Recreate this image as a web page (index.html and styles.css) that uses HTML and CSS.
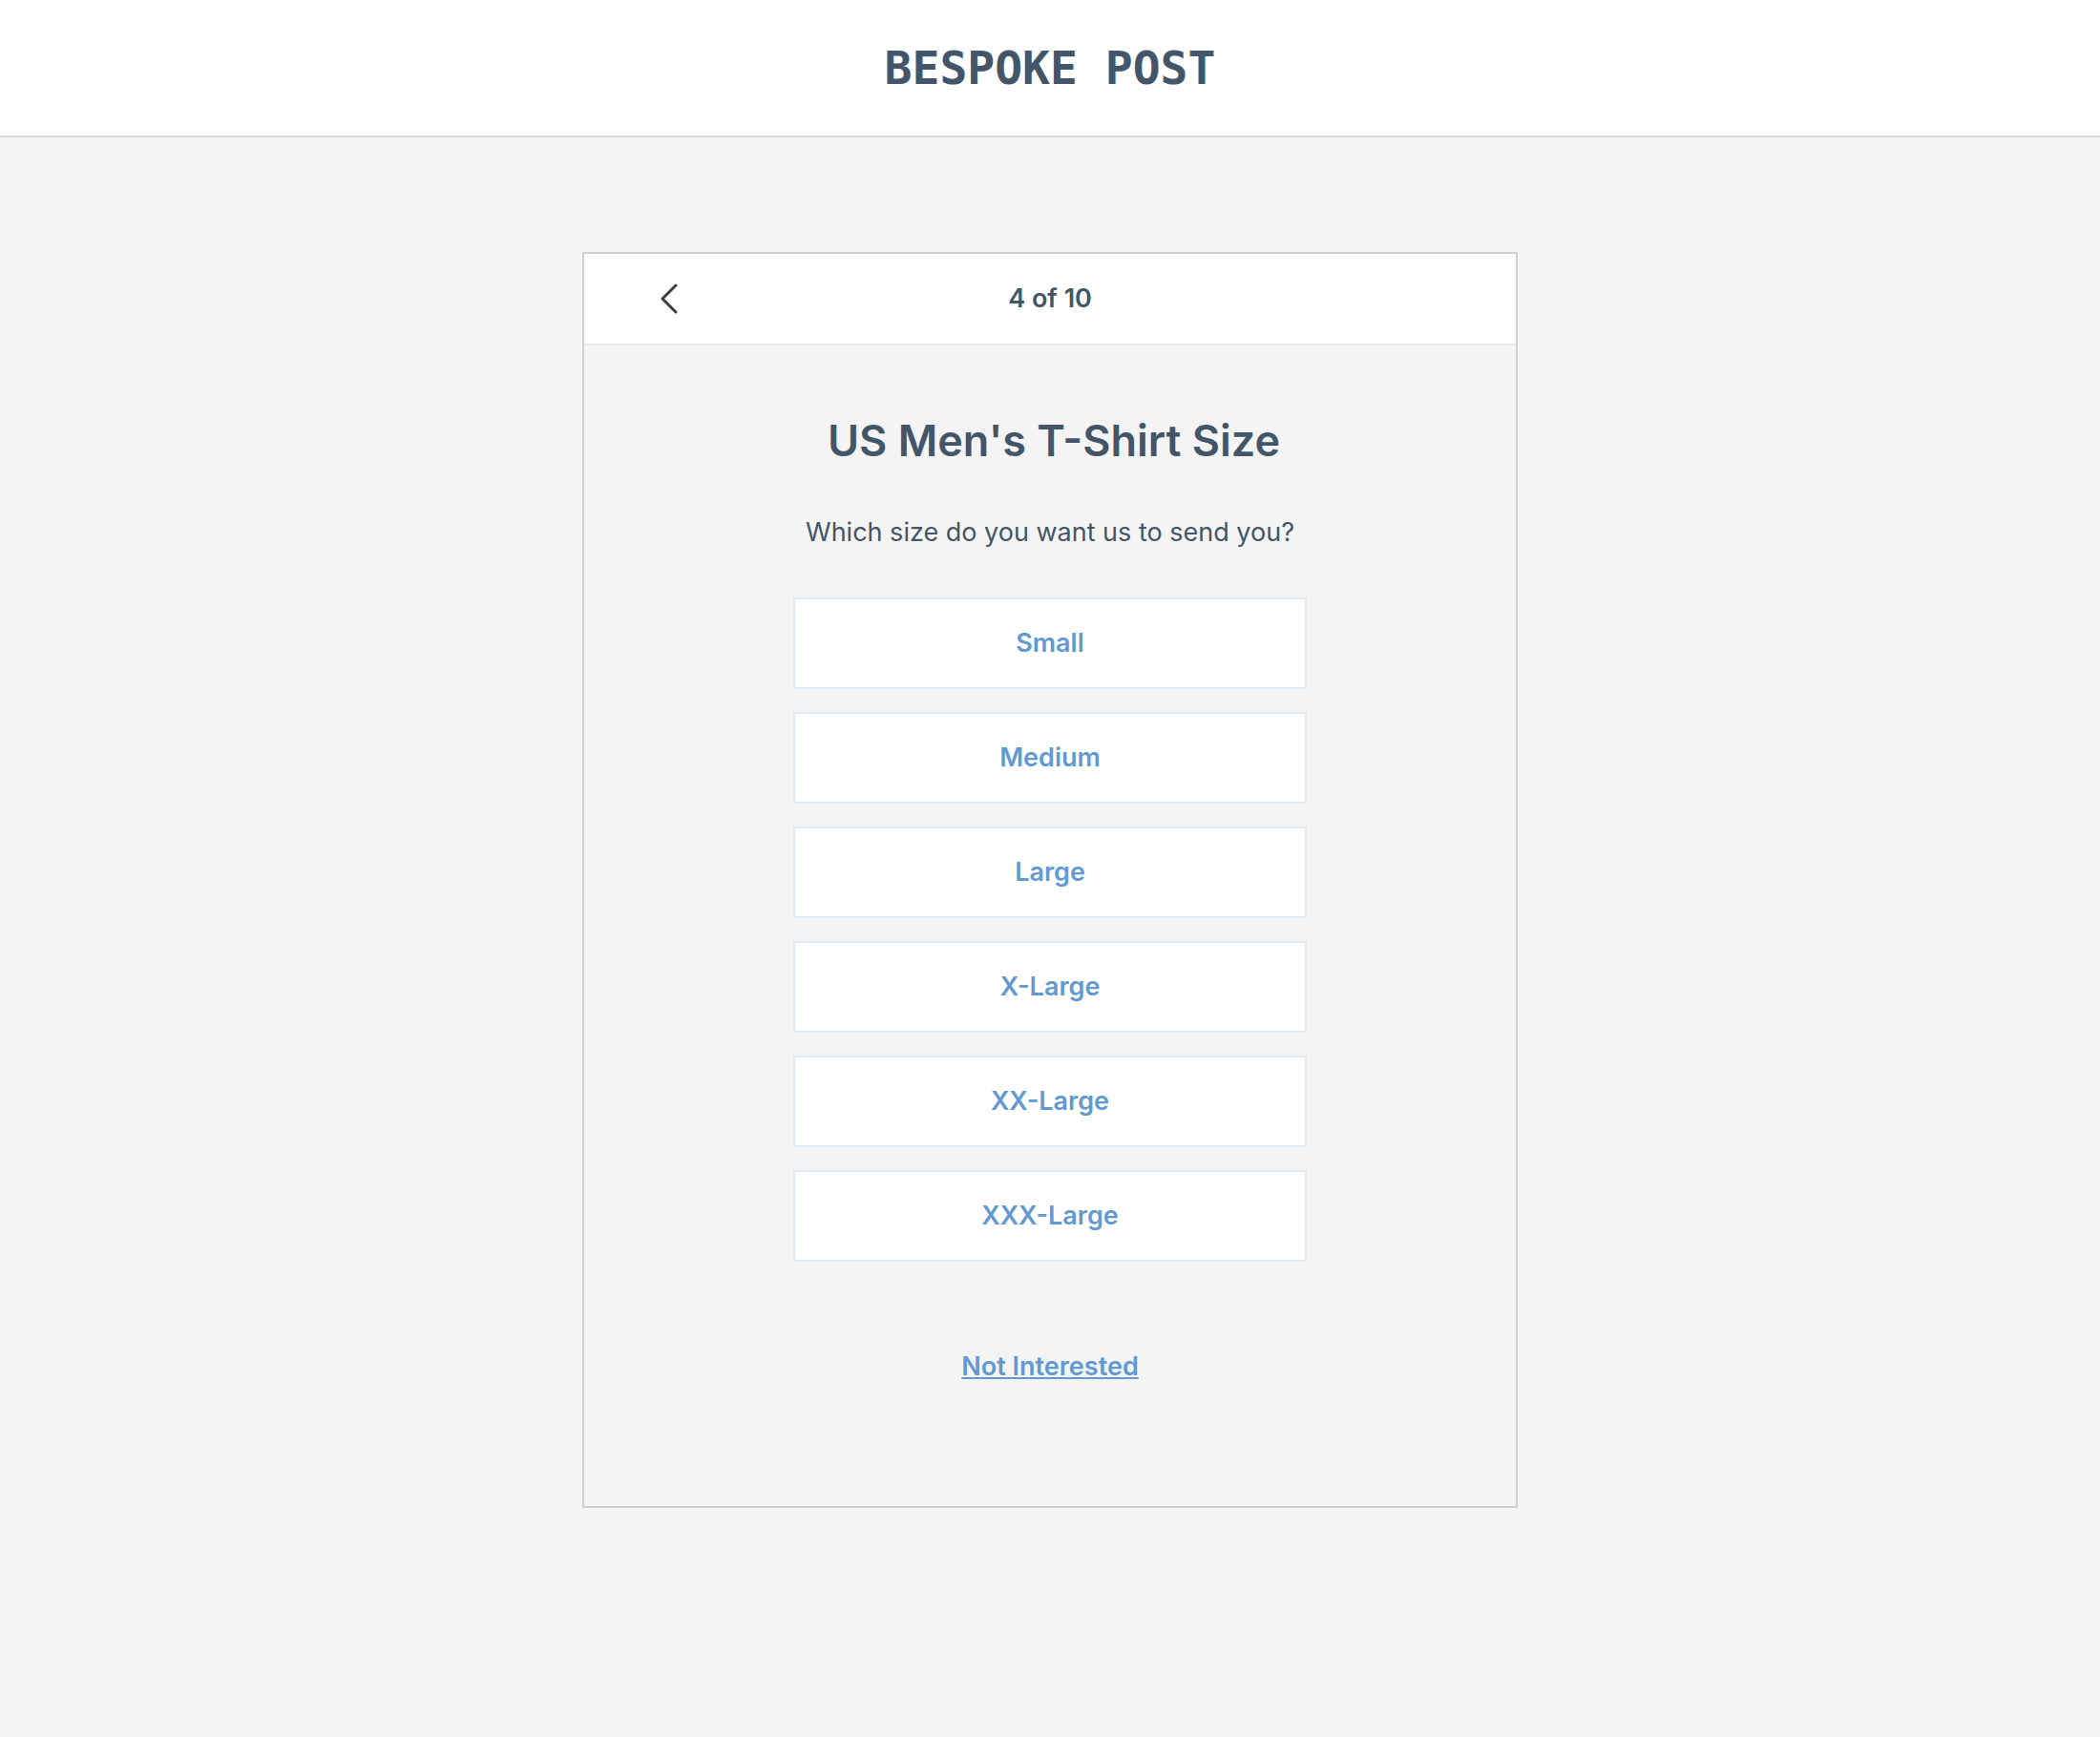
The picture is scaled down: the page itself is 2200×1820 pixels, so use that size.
FILE: index.html
```html
<!DOCTYPE html>
<html lang="en">
<head>
<meta charset="utf-8">
<meta name="viewport" content="width=device-width, initial-scale=1">
<title>Bespoke Post</title>
<link rel="stylesheet" href="styles.css">
</head>
<body>
<header class="site-header"><a class="logo" href="#">BESPOKE POST</a></header>
<main class="quiz">
  <div class="quiz-bar">
    <button class="back" type="button" aria-label="Back">
      <svg width="20" height="34" viewBox="0 0 20 34" fill="none" stroke="#3d3d3d" stroke-width="3" stroke-linecap="round" stroke-linejoin="round" aria-hidden="true"><path d="M16 3 2 17l14 14"/></svg>
    </button>
    <p class="progress">4 of 10</p>
  </div>
  <div class="quiz-body">
    <h1 class="title">US Men's T-Shirt Size</h1>
    <p class="question">Which size do you want us to send you?</p>
    <div class="options">
      <button class="option" type="button">Small</button>
      <button class="option" type="button">Medium</button>
      <button class="option" type="button">Large</button>
      <button class="option" type="button">X-Large</button>
      <button class="option" type="button">XX-Large</button>
      <button class="option" type="button">XXX-Large</button>
    </div>
    <a class="skip" href="#">Not Interested</a>
  </div>
</main>
</body>
</html>
```
FILE: styles.css
```css
* { box-sizing: border-box; }

body {
  margin: 0;
  background: #f4f4f4;
  color: #435669;
  font-family: Inter, "Liberation Sans", sans-serif;
  font-size: 27px;
  line-height: 40px;
}

h1, p { margin: 0; }

.site-header {
  display: flex;
  justify-content: center;
  padding: 41px 24px;
  background: #fff;
  border-bottom: 2px solid #d6d6d6;
}

.logo {
  color: inherit;
  font-family: "DejaVu Sans Mono", "Liberation Mono", monospace;
  font-size: 48px;
  font-weight: 700;
  line-height: 60px;
  text-decoration: none;
}

.quiz {
  max-width: 980px;
  margin: 120px auto;
  border: 2px solid #cfcfcf;
}

.quiz-bar {
  display: grid;
  grid-template-columns: 1fr auto 1fr;
  align-items: center;
  padding: 27px 72px;
  background: #fff;
  border-bottom: 2px solid #e9e9e9;
}

.back {
  display: flex;
  justify-self: start;
  padding: 0 8px;
  border: 0;
  background: none;
  cursor: pointer;
}

.progress { font-weight: 600; }

.quiz-body {
  display: flex;
  flex-direction: column;
  align-items: center;
  padding: 72px 24px 126px;
  text-align: center;
}

.title {
  padding-left: 8px;
  font-size: 45px;
  font-weight: 600;
  line-height: 56px;
}

.question { margin-top: 48px; }

.options {
  display: grid;
  gap: 24px;
  width: 100%;
  max-width: 538px;
  margin-top: 48px;
}

.option {
  height: 96px;
  border: 2px solid #deebf7;
  background: #fff;
  color: #6299d1;
  font: inherit;
  font-weight: 600;
  cursor: pointer;
}

.skip {
  margin-top: 90px;
  color: #6299d1;
  font-weight: 600;
  text-decoration-thickness: 2px;
  text-underline-offset: 2px;
}
```
